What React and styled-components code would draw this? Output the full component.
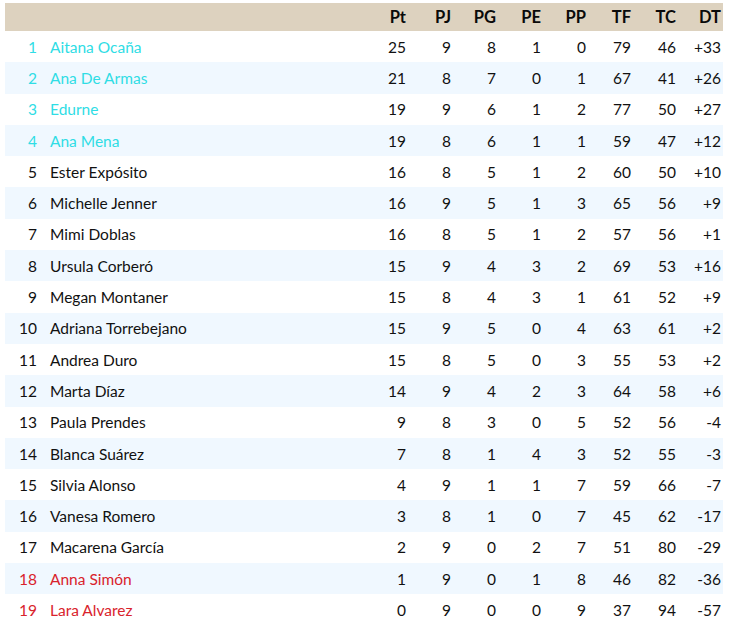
import React from "react";
import styled, { createGlobalStyle } from "styled-components";

const players = [
  ["Aitana Ocaña", 25, 9, 8, 1, 0, 79, 46, "+33"],
  ["Ana De Armas", 21, 8, 7, 0, 1, 67, 41, "+26"],
  ["Edurne", 19, 9, 6, 1, 2, 77, 50, "+27"],
  ["Ana Mena", 19, 8, 6, 1, 1, 59, 47, "+12"],
  ["Ester Expósito", 16, 8, 5, 1, 2, 60, 50, "+10"],
  ["Michelle Jenner", 16, 9, 5, 1, 3, 65, 56, "+9"],
  ["Mimi Doblas", 16, 8, 5, 1, 2, 57, 56, "+1"],
  ["Ursula Corberó", 15, 9, 4, 3, 2, 69, 53, "+16"],
  ["Megan Montaner", 15, 8, 4, 3, 1, 61, 52, "+9"],
  ["Adriana Torrebejano", 15, 9, 5, 0, 4, 63, 61, "+2"],
  ["Andrea Duro", 15, 8, 5, 0, 3, 55, 53, "+2"],
  ["Marta Díaz", 14, 9, 4, 2, 3, 64, 58, "+6"],
  ["Paula Prendes", 9, 8, 3, 0, 5, 52, 56, "-4"],
  ["Blanca Suárez", 7, 8, 1, 4, 3, 52, 55, "-3"],
  ["Silvia Alonso", 4, 9, 1, 1, 7, 59, 66, "-7"],
  ["Vanesa Romero", 3, 8, 1, 0, 7, 45, 62, "-17"],
  ["Macarena García", 2, 9, 0, 2, 7, 51, 80, "-29"],
  ["Anna Simón", 1, 9, 0, 1, 8, 46, 82, "-36"],
  ["Lara Alvarez", 0, 9, 0, 0, 9, 37, 94, "-57"],
];

const headers = ["Pt", "PJ", "PG", "PE", "PP", "TF", "TC", "DT"];

const zoneColor = {
  top: "#2fdde5",
  bottom: "#d9232c",
  mid: "#111",
};

const GlobalStyle = createGlobalStyle`
  body {
    margin: 3px 8px 0 5px;
    background: #fff;
    font-family: "Lato", "Open Sans", sans-serif;
    color: #111;
  }
`;

const Table = styled.table`
  width: 718px;
  table-layout: fixed;
  border-collapse: collapse;
  font-size: 15.5px;
`;

const HeadRow = styled.tr`
  background: #ddd2bf;
  height: 28px;
`;

const Th = styled.th`
  box-sizing: border-box;
  width: 45px;
  padding: 0 2px 0 0;
  text-align: right;
  font-weight: 700;
  font-size: 16.5px;
  color: #0a0a0a;
`;

const BlankTh = styled.th`
  box-sizing: border-box;
  width: ${(p) => p.$w};
  padding: 0;
`;

const Row = styled.tr`
  height: 31.3px;
  background: ${(p) => (p.$odd ? "#f0f8ff" : "#fff")};
`;

const Rank = styled.td`
  padding: 0;
  text-align: right;
  color: ${(p) => zoneColor[p.$zone]};
`;

const Name = styled.td`
  padding: 0 0 0 13px;
  text-align: left;
  white-space: nowrap;
  color: ${(p) => zoneColor[p.$zone]};
`;

const Num = styled.td`
  padding: 0 2px 0 0;
  text-align: right;
`;

export default function App() {
  return (
    <>
      <GlobalStyle />
      <Table>
        <thead>
          <HeadRow>
            <BlankTh $w="32px" />
            <BlankTh $w="326px" />
            {headers.map((h) => (
              <Th key={h}>{h}</Th>
            ))}
          </HeadRow>
        </thead>
        <tbody>
          {players.map(([name, ...stats], i) => {
            const zone = i < 4 ? "top" : i >= 17 ? "bottom" : "mid";
            return (
              <Row key={name} $odd={i % 2 === 1}>
                <Rank $zone={zone}>{i + 1}</Rank>
                <Name $zone={zone}>{name}</Name>
                {stats.map((s, j) => (
                  <Num key={j}>{s}</Num>
                ))}
              </Row>
            );
          })}
        </tbody>
      </Table>
    </>
  );
}
